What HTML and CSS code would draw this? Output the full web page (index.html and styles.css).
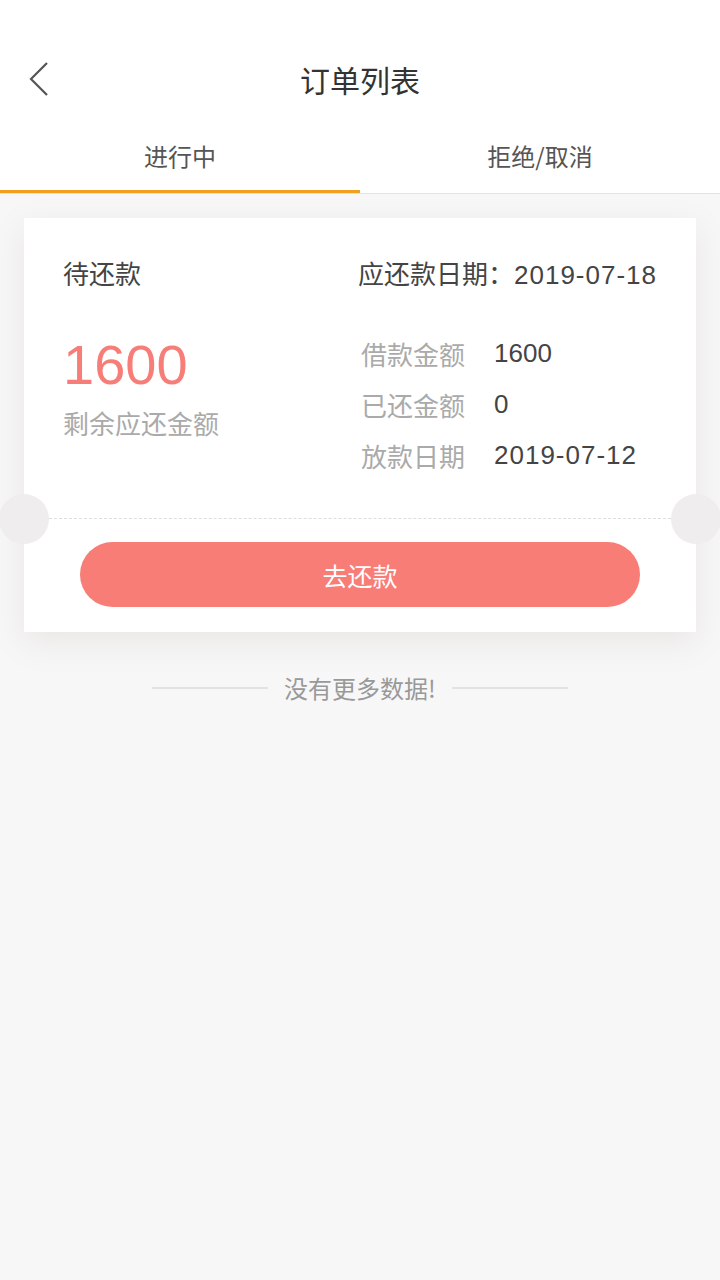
FILE: index.html
```html
<!DOCTYPE html>
<html lang="zh">
<head>
<meta charset="utf-8">
<title>订单列表</title>
<link rel="stylesheet" href="styles.css">
</head>
<body>
<div class="page">
  <header class="nav">
    <span class="back">
      <svg width="20" height="34" viewBox="0 0 20 34"><path d="M18 1 L2 17 L18 33" fill="none" stroke="#555" stroke-width="2.2"/></svg>
    </span>
    <h1 class="title">订单列表</h1>
  </header>
  <nav class="tabs">
    <div class="tab active">进行中</div>
    <div class="tab">拒绝/取消</div>
  </nav>
  <main class="content">
    <section class="card">
      <div class="card-top">
        <div class="card-head">
          <span class="status">待还款</span>
          <span class="due">应还款日期：<span class="date">2019-07-18</span></span>
        </div>
        <div class="card-body">
          <div class="left">
            <div class="amount">1600</div>
            <div class="amount-label">剩余应还金额</div>
          </div>
          <div class="right">
            <div class="row"><span class="k">借款金额</span><span class="v">1600</span></div>
            <div class="row"><span class="k">已还金额</span><span class="v">0</span></div>
            <div class="row"><span class="k">放款日期</span><span class="v date">2019-07-12</span></div>
          </div>
        </div>
      </div>
      <div class="divider"></div>
      <div class="card-bottom">
        <button class="pay">去还款</button>
      </div>
    </section>
    <div class="nomore">
      <span class="line"></span>
      <span class="nomore-text">没有更多数据!</span>
      <span class="line"></span>
    </div>
  </main>
</div>
</body>
</html>
```
FILE: styles.css
```css
* { box-sizing: border-box; }
html, body { margin: 0; padding: 0; }
body {
  font-family: "Liberation Sans", "Noto Sans CJK SC", sans-serif;
  background: #f7f7f7;
  color: #444;
  width: 720px;
  min-height: 1280px;
}
.page { min-height: 1280px; background: #f7f7f7; }
.nav {
  background: #fff;
  height: 118px;
  padding-top: 40px;
  display: flex;
  align-items: center;
  justify-content: center;
  position: relative;
}
.back {
  position: absolute;
  left: 29px;
  top: 62px;
  display: flex;
}
.title {
  margin: 0;
  font-size: 30px;
  font-weight: normal;
  color: #333;
  line-height: 78px;
  font-family: "Noto Sans CJK SC", sans-serif;
}
.tabs {
  display: flex;
  background: #fff;
  height: 76px;
  border-bottom: 1px solid #e3e3e3;
}
.tab {
  flex: 1;
  display: flex;
  align-items: center;
  justify-content: center;
  font-size: 24px;
  color: #555;
  font-family: "Noto Sans CJK SC", sans-serif;
  border-bottom: 3px solid transparent;
  padding-top: 2px;
}
.tab.active { border-bottom-color: #f0a020; }
.content { padding: 24px 24px 0; }
.card {
  background: #fff;
  box-shadow: 0 10px 30px rgba(160, 130, 130, 0.14);
  position: relative;
}
.card-top { padding: 40px 39px 37px; }
.card-head {
  display: flex;
  justify-content: space-between;
  font-size: 26px;
  line-height: 34px;
  color: #444;
}
.date { letter-spacing: 1px; }
.card-body {
  display: flex;
  margin-top: 36px;
}
.left { flex: 1; padding-top: 6px; }
.amount {
  font-size: 56px;
  line-height: 62px;
  color: #f77e78;
}
.amount-label {
  margin-top: 12px;
  font-size: 26px;
  line-height: 34px;
  color: #aaa;
}
.right { width: 296px; }
.row {
  display: flex;
  height: 51px;
  align-items: center;
  font-size: 26px;
}
.k { color: #aaa; width: 133px; }
.v { color: #444; }
.divider {
  margin: 0 25px;
  border-top: 1px dashed #ddd;
  position: relative;
}
.divider::before, .divider::after {
  content: "";
  position: absolute;
  top: -25px;
  width: 50px;
  height: 50px;
  border-radius: 50%;
  background: #efeded;
}
.divider::before { left: -50px; }
.divider::after { right: -50px; }
.card-bottom { padding: 23px 56px 25px; }
.pay {
  display: block;
  width: 100%;
  height: 65px;
  border: none;
  border-radius: 33px;
  background: #f87d77;
  color: #fff;
  font-size: 25px;
  font-family: "Noto Sans CJK SC", sans-serif;
}
.nomore {
  margin-top: 39px;
  display: flex;
  align-items: center;
  justify-content: center;
  gap: 16px;
}
.line {
  width: 116px;
  height: 2px;
  background: #e2e2e2;
}
.nomore-text {
  font-size: 24px;
  line-height: 34px;
  color: #999;
  font-family: "Noto Sans CJK SC", sans-serif;
}
```
